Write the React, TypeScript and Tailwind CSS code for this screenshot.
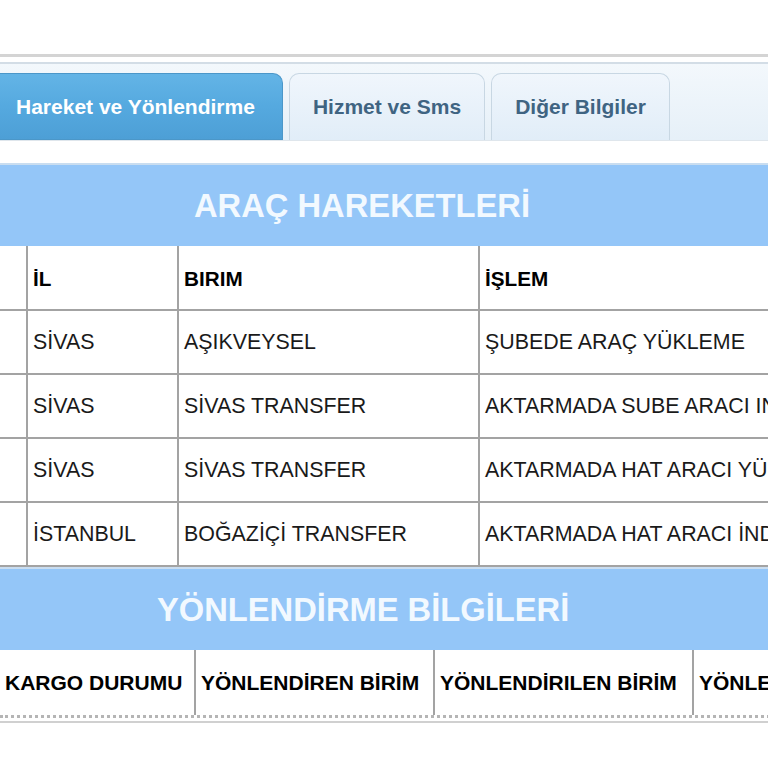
import React from "react";

const hareketler = [
  { il: "SİVAS", birim: "AŞIKVEYSEL", islem: "ŞUBEDE ARAÇ YÜKLEME" },
  { il: "SİVAS", birim: "SİVAS TRANSFER", islem: "AKTARMADA SUBE ARACI INDIRME" },
  { il: "SİVAS", birim: "SİVAS TRANSFER", islem: "AKTARMADA HAT ARACI YÜKLEME" },
  { il: "İSTANBUL", birim: "BOĞAZİÇİ TRANSFER", islem: "AKTARMADA HAT ARACI İNDİRME" },
];

const yonlendirmeCols = ["KARGO DURUMU", "YÖNLENDİREN BİRİM", "YÖNLENDİRILEN BİRİM", "YÖNLENDİRME TARİHİ"];

const Tab = ({ label, active, width }: { label: string; active?: boolean; width: string }) => (
  <div
    className={
      active
        ? `${width} h-[67px] flex items-center pl-4 rounded-tr-[10px] bg-gradient-to-b from-[#63b4e6] via-[#55a9df] to-[#4d9fd6] text-white border border-[#4b97c9] border-l-0`
        : `${width} h-[67px] flex items-center justify-center rounded-t-[10px] bg-gradient-to-b from-[#f0f6fc] to-[#e1edf8] border border-[#c8d7e3] border-b-0 text-[#3f6482]`
    }
  >
    <span className="text-[21px] font-bold whitespace-nowrap">{label}</span>
  </div>
);

const SectionBand = ({ title, pl }: { title: string; pl: string }) => (
  <div className={`h-[83px] bg-[#94c6f8] border-t-2 border-[#c9ddf0] flex items-center ${pl}`}>
    <span className="text-[32.7px] font-bold text-[#f2f9ff] whitespace-nowrap">{title}</span>
  </div>
);

export default function App() {
  return (
    <div className="w-[768px] h-[768px] overflow-hidden bg-white" style={{ fontFamily: '"Liberation Sans", Arial, sans-serif' }}>
      <div className="h-[54px]" />
      <div className="h-[3px] bg-[#d4d4d4]" />
      <div className="h-[5px] bg-white" />
      {/* tab strip */}
      <div className="h-[78px] bg-gradient-to-b from-[#f3f8fc] to-[#e6f0f8] border-t-2 border-[#d3dde6] flex items-end gap-[6px]">
        <Tab label="Hareket ve Yönlendirme" active width="w-[283px]" />
        <Tab label="Hizmet ve Sms" width="w-[196px]" />
        <Tab label="Diğer Bilgiler" width="w-[179px]" />
      </div>
      <div className="h-[23px] bg-white border-t border-[#dfe6ec]" />

      <SectionBand title="ARAÇ HAREKETLERİ" pl="pl-[194px]" />
      <div className="grid grid-cols-[26px_151px_301px_400px] w-[878px]">
        {["", "İL", "BIRIM", "İŞLEM"].map((h, i) => (
          <div
            key={i}
            className={`h-[65px] flex items-center px-[5px] pt-[2px] border-b-2 border-[#a3a3a3] ${i > 0 ? "border-l-2" : ""} text-[20.7px] font-bold text-black`}
          >
            {h}
          </div>
        ))}
        {hareketler.map((r, ri) => (
          <React.Fragment key={ri}>
            <div className="h-[64px] border-b-2 border-[#a3a3a3]" />
            <div className="h-[64px] flex items-center px-[5px] border-b-2 border-l-2 border-[#a3a3a3] text-[21.4px] text-[#1a1a1a] whitespace-nowrap">
              {r.il}
            </div>
            <div className="h-[64px] flex items-center px-[5px] border-b-2 border-l-2 border-[#a3a3a3] text-[21.4px] text-[#1a1a1a] whitespace-nowrap">
              {r.birim}
            </div>
            <div className="h-[64px] flex items-center px-[5px] border-b-2 border-l-2 border-[#a3a3a3] text-[21.4px] text-[#1a1a1a] whitespace-nowrap overflow-hidden">
              {r.islem}
            </div>
          </React.Fragment>
        ))}
      </div>

      <SectionBand title="YÖNLENDİRME BİLGİLERİ" pl="pl-[157px]" />
      <div className="grid grid-cols-[194px_239px_259px_300px] w-[992px] border-b-[3px] border-dotted border-[#b5b5b5]">
        {yonlendirmeCols.map((h, i) => (
          <div
            key={i}
            className={`h-[65px] flex items-center px-[5px] ${i > 0 ? "border-l-2 border-[#a3a3a3]" : ""} text-[21px] font-bold text-black whitespace-nowrap overflow-hidden`}
          >
            {h}
          </div>
        ))}
      </div>
      <div className="h-[3px]" />
      <div className="h-[2px] bg-[#d0d0d0]" />
    </div>
  );
}
